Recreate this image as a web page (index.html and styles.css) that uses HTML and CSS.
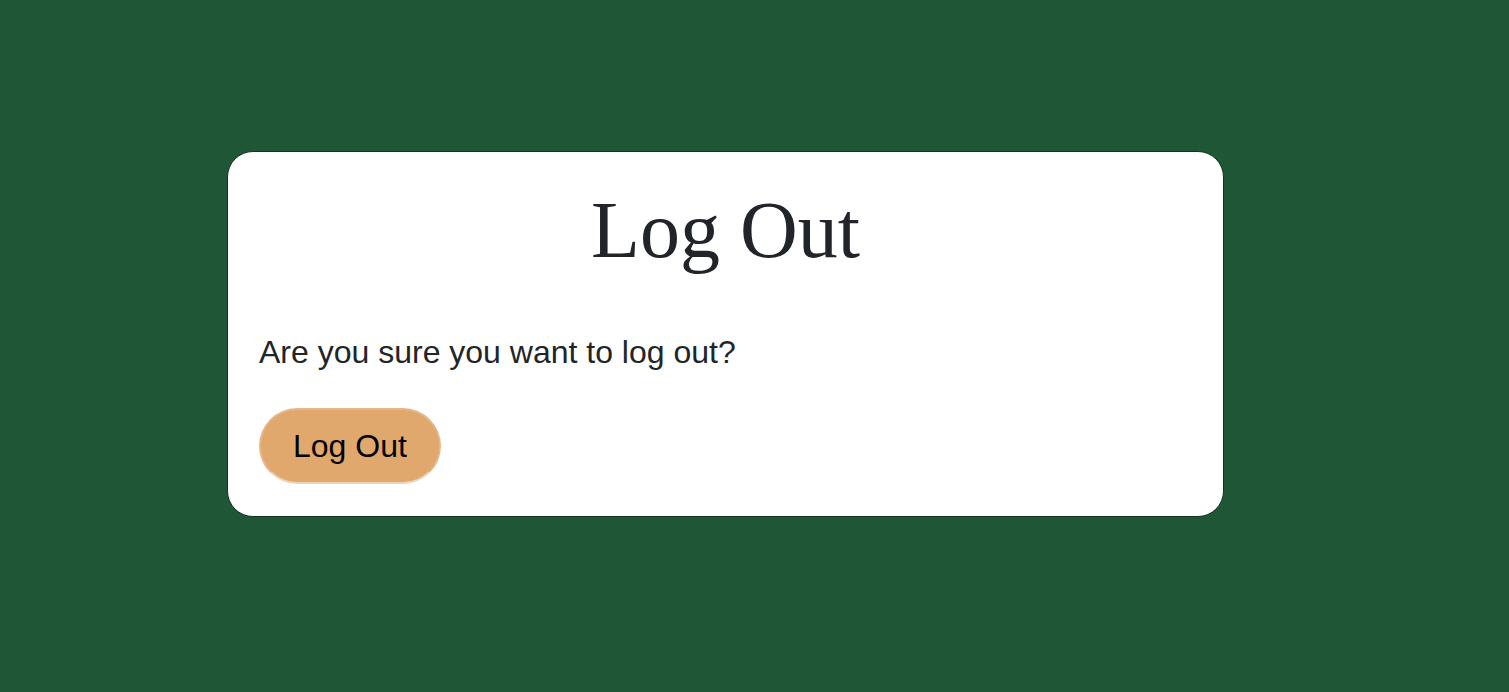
FILE: index.html
```html
<!DOCTYPE html>
<html lang="en">
<head>
<meta charset="utf-8">
<title>Log Out</title>
<link rel="stylesheet" href="styles.css">
</head>
<body>
<main class="page">
  <section class="card">
    <h1 class="card-title">Log Out</h1>
    <p class="card-text">Are you sure you want to log out?</p>
    <button class="btn-logout" type="button">Log Out</button>
  </section>
</main>
</body>
</html>
```
FILE: styles.css
```css
html, body {
  margin: 0;
  padding: 0;
}
body {
  background: #1e5636;
  font-family: "Liberation Sans", Arial, sans-serif;
  color: #212529;
  height: 692px;
  overflow: hidden;
}
.page {
  padding: 151px 0 0 227px;
}
.card {
  box-sizing: border-box;
  width: 997px;
  height: 366px;
  background: #ffffff;
  border: 1px solid #12331f;
  border-radius: 26px;
  padding: 30px 31px 31px;
  display: flex;
  flex-direction: column;
  align-items: flex-start;
}
.card-title {
  align-self: stretch;
  margin: 0;
  text-align: center;
  font-family: "Liberation Serif", "Times New Roman", serif;
  font-weight: 400;
  font-size: 80px;
  line-height: 96px;
  color: #212529;
}
.card-text {
  margin: 50px 0 32px;
  font-size: 32px;
  line-height: 48px;
}
.btn-logout {
  font-family: "Liberation Sans", Arial, sans-serif;
  font-size: 32px;
  line-height: 48px;
  color: #000;
  background: #e0a86d;
  border: 2px solid #e6b689;
  border-bottom-color: #ecd5bf;
  border-radius: 40px;
  padding: 12px 32px;
  cursor: pointer;
}
```
